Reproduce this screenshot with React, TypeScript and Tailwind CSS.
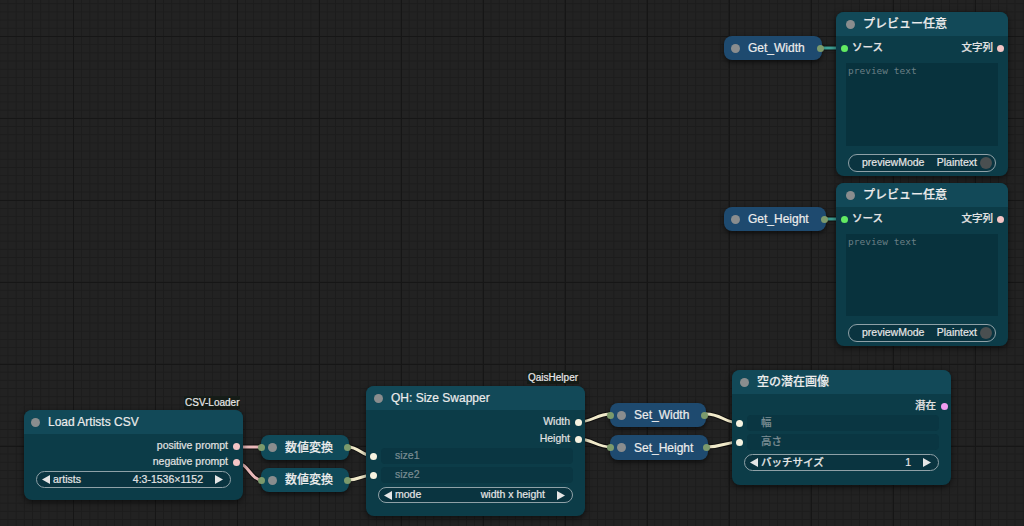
import React from 'react'

// ComfyUI-like node graph canvas

type Pt = [number, number]

const links: { a: Pt; b: Pt; color: string }[] = [
  { a: [822, 48], b: [845, 48], color: '#3fa396' },
  { a: [824, 219], b: [845, 219], color: '#3fa396' },
  { a: [237, 447], b: [262, 447], color: '#e9b9b9' },
  { a: [237, 463], b: [262, 480], color: '#e9b9b9' },
  { a: [348, 447], b: [373, 456], color: '#f2ebcb' },
  { a: [348, 480], b: [373, 475], color: '#f2ebcb' },
  { a: [578, 422], b: [611, 414], color: '#f2ebcb' },
  { a: [578, 439], b: [611, 447], color: '#f2ebcb' },
  { a: [706, 414], b: [740, 423], color: '#f2ebcb' },
  { a: [707, 447], b: [740, 442], color: '#f2ebcb' },
]

function linkPath(a: Pt, b: Pt) {
  const d = Math.abs(b[0] - a[0]) * 0.45
  return `M${a[0]} ${a[1]} C${a[0] + d} ${a[1]}, ${b[0] - d} ${b[1]}, ${b[0]} ${b[1]}`
}

const Dot: React.FC<{ className: string }> = ({ className }) => (
  <span className={`inline-block w-[7px] h-[7px] rounded-full shrink-0 ${className}`} />
)

const TitleDot = () => <span className="inline-block w-[9px] h-[9px] rounded-full bg-[#8a8d8e] shrink-0" />

const Left = () => (
  <svg width="8" height="9" viewBox="0 0 8 9" className="shrink-0">
    <polygon points="8,0 8,9 0,4.5" fill="#e6e6e6" />
  </svg>
)
const Right = () => (
  <svg width="8" height="9" viewBox="0 0 8 9" className="shrink-0">
    <polygon points="0,0 0,9 8,4.5" fill="#e6e6e6" />
  </svg>
)

/** Combo widget: ◀ label ........ value ▶ */
const Combo: React.FC<{ label: string; value: string; className?: string }> = ({ label, value, className }) => (
  <div
    className={`h-[17px] rounded-full border border-[#8fa1a7] bg-[#0a3440] flex items-center pl-[5px] pr-[7px] text-[10.5px] text-[#e6e6e6] ${className ?? ''}`}
  >
    <Left />
    <span className="ml-[3px]">{label}</span>
    <span className="ml-auto mr-[12px]">{value}</span>
    <Right />
  </div>
)

/** Collapsed-style reroute / set / get node */
const Pill: React.FC<{
  x: number
  y: number
  w: number
  h: number
  label: string
  blue?: boolean
  input?: boolean
  outColor: string
}> = ({ x, y, w, h, label, blue, input, outColor }) => (
  <div
    className={`absolute rounded-[8px] flex items-center shadow-[0_2px_5px_rgba(0,0,0,0.6)] text-[12px] text-[#ececec] ${
      blue ? 'bg-[#1e4a6f]' : 'bg-[#104a59]'
    }`}
    style={{ left: x, top: y, width: w, height: h }}
  >
    {input && <span className="absolute left-[-3px] w-[7px] h-[7px] rounded-full bg-[#7c9a6c]" />}
    <span className="ml-[7px] mr-[8px] flex">
      <TitleDot />
    </span>
    <span>{label}</span>
    <span className={`absolute right-[-2px] w-[7px] h-[7px] rounded-full ${outColor}`} />
  </div>
)

const NodeTitle: React.FC<{ title: string; pl?: string }> = ({ title, pl }) => (
  <div
    className={`h-[24px] shrink-0 flex items-center gap-[8px] rounded-t-[8px] bg-[#124958] text-[12px] text-[#ececec] ${pl ?? 'pl-[8px]'}`}
  >
    <TitleDot />
    <span>{title}</span>
  </div>
)

const PreviewNode: React.FC<{ y: number; h: number }> = ({ y, h }) => (
  <div
    className="absolute left-[836px] w-[172px] rounded-[8px] bg-[#0c3c48] flex flex-col shadow-[0_2px_6px_rgba(0,0,0,0.6)]"
    style={{ top: y, height: h }}
  >
    <NodeTitle title="プレビュー任意" pl="pl-[10px]" />
    <div className="h-[24px] flex items-center pl-[5px] pr-[4px] text-[10.5px] text-[#e2e2e2]">
      <Dot className="bg-[#62ea62]" />
      <span className="ml-[4px]">ソース</span>
      <span className="ml-auto mr-[4px]">文字列</span>
      <Dot className="bg-[#f4c5c5]" />
    </div>
    <div className="mx-[10px] mt-[3px] flex-1 bg-[#08323d] px-[2px] pt-[1px] font-['DejaVu_Sans_Mono',monospace] font-normal [-webkit-text-stroke:0px] text-[9.5px] text-[#6a7f85]">
      preview text
    </div>
    <div className="mx-[12px] mt-[8px] mb-[4px] h-[18px] rounded-full border border-[#8fa1a7] bg-[#0a3440] flex items-center pl-[13px] pr-[3px] text-[10.5px] text-[#e6e6e6]">
      <span>previewMode</span>
      <span className="ml-auto mr-[3px]">Plaintext</span>
      <span className="w-[12px] h-[12px] rounded-full bg-[#4a4f50]" />
    </div>
  </div>
)

const OutRow: React.FC<{ label: string; dot: string }> = ({ label, dot }) => (
  <div className="h-[16px] flex items-center justify-end pr-[3px] text-[10.5px] text-[#e2e2e2]">
    <span className="mr-[5px]">{label}</span>
    <Dot className={dot} />
  </div>
)

const InRow: React.FC<{ label: string; className?: string }> = ({ label, className }) => (
  <div className={`h-[16px] flex items-center pl-[4px] pr-[12px] ${className ?? ''}`}>
    <Dot className="bg-[#f7f3e1]" />
    <div className="ml-[4px] flex-1 h-full rounded-[4px] bg-[#0a3642] flex items-center pl-[14px] text-[10.5px] text-[#7b8d93]">
      {label}
    </div>
  </div>
)

const Label: React.FC<{ x: number; y: number; text: string }> = ({ x, y, text }) => (
  <div
    className="absolute h-[13px] px-[1px] flex items-center bg-[#151c17] text-[10px] text-[#e8e8e8]"
    style={{ left: x, top: y }}
  >
    {text}
  </div>
)

export default function App() {
  return (
    <div className="relative w-[1024px] h-[526px] overflow-hidden bg-[#222222] bg-[linear-gradient(to_right,#161616_1px,transparent_1px),linear-gradient(to_bottom,#161616_1px,transparent_1px),linear-gradient(to_right,#1c1c1c_1px,transparent_1px),linear-gradient(to_bottom,#1c1c1c_1px,transparent_1px)] [background-size:82px_82px,82px_82px,8.2px_8.2px,8.2px_8.2px] [background-position:73px_36px,73px_36px,73px_36px,73px_36px] font-['Liberation_Sans','Noto_Sans_CJK_JP',sans-serif] font-medium [-webkit-text-stroke:0.2px]">
      {/* links */}
      <svg className="absolute inset-0" width="1024" height="526">
        {links.map((l, i) => (
          <g key={i}>
            <path d={linkPath(l.a, l.b)} stroke="rgba(0,0,0,0.5)" strokeWidth="5" fill="none" />
            <path d={linkPath(l.a, l.b)} stroke={l.color} strokeWidth="3" fill="none" />
          </g>
        ))}
      </svg>

      {/* preview nodes */}
      <PreviewNode y={12} h={164} />
      <PreviewNode y={183} h={163} />
      <Pill x={724} y={36} w={98} h={24} label="Get_Width" blue outColor="bg-[#7c9a6c]" />
      <Pill x={724} y={207} w={102} h={24} label="Get_Height" blue outColor="bg-[#7c9a6c]" />

      {/* Load Artists CSV */}
      <Label x={184} y={396} text="CSV-Loader" />
      <div className="absolute left-[24px] top-[410px] w-[219px] h-[90px] rounded-[8px] bg-[#0c3c48] flex flex-col shadow-[0_2px_6px_rgba(0,0,0,0.6)]">
        <NodeTitle title="Load Artists CSV" pl="pl-[7px]" />
        <div className="pt-[4px]">
          <OutRow label="positive prompt" dot="bg-[#f4c5c5]" />
          <OutRow label="negative prompt" dot="bg-[#f4c5c5]" />
        </div>
        <Combo label="artists" value="4:3-1536×1152" className="mx-[12px] mt-[1px]" />
      </div>

      <Pill x={261} y={435} w={88} h={25} label="数値変換" input outColor="bg-[#7c9a6c]" />
      <Pill x={261} y={468} w={88} h={24} label="数値変換" input outColor="bg-[#7c9a6c]" />

      {/* QH: Size Swapper */}
      <Label x={527} y={371} text="QaisHelper" />
      <div className="absolute left-[366px] top-[386px] w-[219px] h-[130px] rounded-[8px] bg-[#0c3c48] flex flex-col shadow-[0_2px_6px_rgba(0,0,0,0.6)]">
        <NodeTitle title="QH: Size Swapper" />
        <div className="pt-[4px]">
          <OutRow label="Width" dot="bg-[#f7f3e1]" />
          <div className="h-[1px]" />
          <OutRow label="Height" dot="bg-[#f7f3e1]" />
        </div>
        <InRow label="size1" className="mt-[1px]" />
        <InRow label="size2" className="mt-[3px]" />
        <Combo label="mode" value="width x height" className="mx-[12px] mt-[4px] !h-[16px]" />
      </div>

      <Pill x={610} y={403} w={96} h={24} label="Set_Width" blue input outColor="bg-[#7c9a6c]" />
      <Pill x={610} y={435} w={98} h={25} label="Set_Height" blue input outColor="bg-[#7c9a6c]" />

      {/* 空の潜在画像 */}
      <div className="absolute left-[732px] top-[370px] w-[219px] h-[115px] rounded-[8px] bg-[#0c3c48] flex flex-col shadow-[0_2px_6px_rgba(0,0,0,0.6)]">
        <NodeTitle title="空の潜在画像" />
        <div className="pt-[4px]">
          <OutRow label="潜在" dot="bg-[#f19bf0]" />
        </div>
        <InRow label="幅" className="mt-[1px]" />
        <InRow label="高さ" className="mt-[3px]" />
        <Combo label="バッチサイズ" value="1" className="mx-[12px] mt-[4px]" />
      </div>
    </div>
  )
}
